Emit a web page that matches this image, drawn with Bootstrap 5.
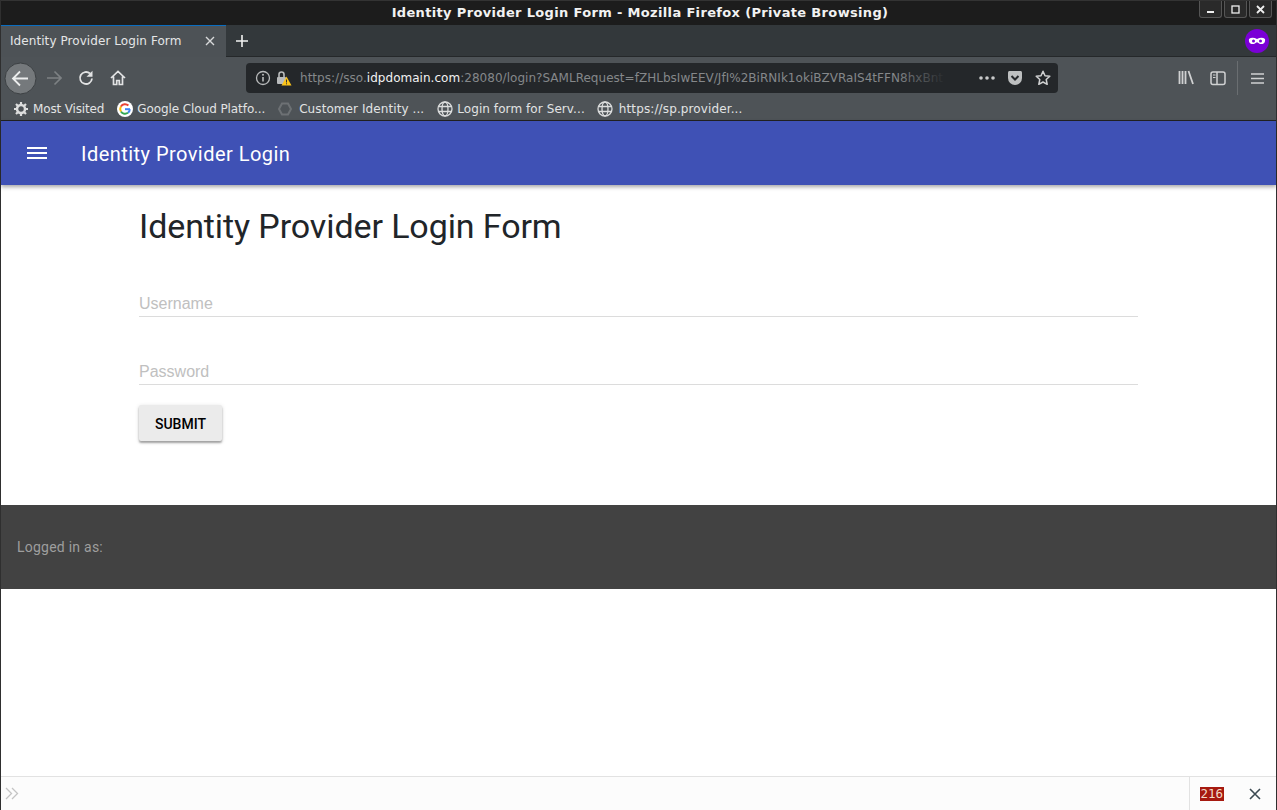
<!DOCTYPE html>
<html lang="en">
<head>
  <meta charset="UTF-8" />
  <title>Identity Provider Login Form</title>
  <link href="https://cdn.jsdelivr.net/npm/bootstrap@5.3.3/dist/css/bootstrap.min.css" rel="stylesheet">
  <style>
    html,body{height:100%;overflow:hidden}
    body{background:#fff;font-family:Roboto,sans-serif;color:#212529}
    svg{flex:none;display:block}
    .frame{height:810px;border:1px solid #2f2f2f;border-top:0}
    .ff{font-family:"DejaVu Sans",sans-serif;font-size:12px;white-space:nowrap}

    .titlebar{height:25px;background:#1c1c1c;color:#f2f2f2;font-weight:700;font-size:13px;letter-spacing:.34px;border-top:1px solid #333}
    .tl-side{flex:1 1 0;align-self:flex-start}
    .tl-title{margin-left:7px}
    .winbtns{gap:2px;padding-right:4px}
    .winbtn{width:23px;height:17px;border:1px solid #555;border-top:0;border-radius:0 0 3px 3px;background:#2a2a2a}

    .tabbar{height:32px;background:#33383b;border-bottom:1px solid #25282a}
    .tab-on{width:225px;height:32px;background:#4d5256;border-top:1px solid #0a6dc0;color:#e5e6e7;padding:0 10px 0 9px;letter-spacing:.07px}
    .new-tab{margin-left:9px}
    .private{margin-left:auto;margin-right:7px;margin-top:1px}

    .tb{height:42px;background:#4e5357}
    .t-back{margin-left:3px}
    .t-fwd{margin-left:9px}
    .t-reload{margin-left:16px}
    .t-home{margin-left:16px}
    .urlbar{margin-left:120px;width:812px;height:30px;background:#24272a;border-radius:4px;color:#85888a;position:relative}
    .u-info{margin-left:9px}
    .u-lock{margin-left:5px}
    .url-txt{margin-left:8px;width:645px;overflow:hidden;letter-spacing:.03px}
    .url-txt b{font-weight:400;color:#f2f2f2}
    .url-fade{position:absolute;left:650px;top:0;width:50px;height:30px;background:linear-gradient(90deg,rgba(36,39,42,0),#24272a)}
    .u-dots{margin-left:33px}
    .u-pocket{margin-left:11px}
    .u-star{margin-left:12px}
    .t-lib{margin-left:120px}
    .t-side{margin-left:15px}
    .t-sep{margin-left:11px;height:34px;border-left:1px solid #6a6e71}
    .t-menu{margin-left:13px}

    .bm{height:22px;background:#4e5357;border-bottom:1px solid #222;color:#e2e3e4;padding:0 0 2px 12px}
    .bm-a{gap:4px;letter-spacing:-.15px}
    .bm-b{gap:4px;margin-left:13px;letter-spacing:-.08px}
    .bm-c{gap:7px;margin-left:13px;letter-spacing:.08px}
    .bm-d{gap:4px;margin-left:13px;letter-spacing:.08px}
    .bm-e{gap:6px;margin-left:12px;letter-spacing:.12px}

    .appbar{height:64px;background:#3f51b5;color:#fff;box-shadow:0 2px 4px rgba(0,0,0,.35);position:relative;font-size:20px;letter-spacing:.46px;padding-left:26px}
    .appbar span{margin-left:34px;padding-top:2px}

    .mainwrap{height:320px;padding:0 138px}
    .mainwrap h1{font-size:34px;font-weight:400;letter-spacing:-.1px;margin:0;padding-top:21px;line-height:40px;color:#212529}
    .fld{height:25px;border-bottom:1px solid #dcdcdc;color:#c0c0c0;font-family:"Liberation Sans",sans-serif;font-size:16px;line-height:24px}
    .fld-a{margin-top:46px}
    .fld-b{margin-top:43px}
    .subm{margin-top:20px;width:83px;height:36px;background:#ebebeb;border:0;border-radius:2px;color:#000;font-weight:500;font-size:14px;box-shadow:0 2px 2px rgba(0,0,0,.3),0 1px 4px rgba(0,0,0,.15);padding:3px 0 0}

    .foot{height:84px;background:#424242;color:#9e9e9e;font-size:14px;letter-spacing:.24px;padding-left:16px;padding-top:1px}
    .spacer{height:187px}

    .findbar{height:34px;background:#fcfcfc;border-top:1px solid #e2e2e2}
    .f-more{margin-left:4px}
    .f-right{margin-left:auto;width:87px;height:33px;border-left:1px solid #e2e2e2;padding-left:10px}
    .cnt{background:#a61a10;color:#f2dcc8;font-family:"DejaVu Sans Mono",monospace;font-size:12.5px;line-height:14px;padding:0 .5px}
    .f-close{margin-left:25px}
  </style>
</head>
<body>
<div class="frame">
  <div class="titlebar ff d-flex align-items-center">
    <div class="tl-side"></div>
    <div class="tl-title">Identity Provider Login Form - Mozilla Firefox (Private Browsing)</div>
    <div class="tl-side winbtns d-flex justify-content-end">
      <div class="winbtn d-flex align-items-center justify-content-center"><svg width="9" height="9"><rect x="1" y="6" width="7" height="2" fill="#eee"/></svg></div>
      <div class="winbtn d-flex align-items-center justify-content-center"><svg width="9" height="9"><rect x="1" y="1" width="7" height="7" fill="none" stroke="#eee" stroke-width="1.3"/></svg></div>
      <div class="winbtn d-flex align-items-center justify-content-center"><svg width="9" height="9"><path d="M1 1l7 7M8 1l-7 7" stroke="#eee" stroke-width="1.8"/></svg></div>
    </div>
  </div>

  <div class="tabbar d-flex align-items-center">
    <div class="tab-on ff d-flex align-items-center justify-content-between">
      <span>Identity Provider Login Form</span>
      <svg width="12" height="12"><path d="M2 2l8 8M10 2l-8 8" stroke="#d8d9da" stroke-width="1.4"/></svg>
    </div>
    <svg class="new-tab" width="14" height="14"><path d="M7 1v12M1 7h12" stroke="#f2f2f2" stroke-width="1.6"/></svg>
    <svg class="private" width="24" height="24"><circle cx="12" cy="12" r="12" fill="#7a00d6"/><path d="M4 10c2-1.600 5-1.600 8 0 3-1.600 6-1.600 8 0 .5 3-1 5-3.500 5-2 0-3-1-4.500-1.800-1.500.8-2.500 1.800-4.500 1.800C5 15 3.500 13 4 10z" fill="#fff"/><circle cx="8.500" cy="12" r="1.500" fill="#7a00d6"/><circle cx="15.500" cy="12" r="1.500" fill="#7a00d6"/></svg>
  </div>

  <div class="tb d-flex align-items-center">
    <svg class="t-back" width="33" height="33"><circle cx="16.500" cy="16.500" r="15.500" fill="#75797c" stroke="#3c4043"/><path d="M9 16.500h15M16 9.500l-7 7 7 7" fill="none" stroke="#eceded" stroke-width="1.800"/></svg>
    <svg class="t-fwd" width="16" height="16"><path d="M1 8h14M8.500 1.500L15 8l-6.500 6.500" fill="none" stroke="#7d8184" stroke-width="1.600"/></svg>
    <svg class="t-reload" width="16" height="16"><path d="M14 8.500A6 6 0 1 1 12 3.500" fill="none" stroke="#e2e3e4" stroke-width="1.800"/><path d="M14.500 0.800v6h-6z" fill="#e2e3e4"/></svg>
    <svg class="t-home" width="16" height="16"><path d="M1 8l7-6.500L15 8M3.500 6.500v8h3.200v-4h2.600v4h3.200v-8" fill="none" stroke="#e2e3e4" stroke-width="1.700"/></svg>
    <div class="urlbar ff d-flex align-items-center">
      <svg class="u-info" width="16" height="16"><circle cx="8" cy="8" r="6.500" fill="none" stroke="#b9bbbc" stroke-width="1.300"/><path d="M8 7v4.500" stroke="#b9bbbc" stroke-width="1.600"/><circle cx="8" cy="4.800" r="1" fill="#b9bbbc"/></svg>
      <svg class="u-lock" width="16" height="16"><rect x="1" y="7" width="9" height="7" rx="1" fill="#b9bbbc"/><path d="M3 7V4.500a2.500 2.500 0 0 1 5 0V7" fill="none" stroke="#b9bbbc" stroke-width="1.600"/><path d="M10.500 6.500l5 9h-10z" fill="#fcc419"/><path d="M10.500 9.500v3M10.500 13.300v1" stroke="#333" stroke-width="1"/></svg>
      <div class="url-txt">https://sso.<b>idpdomain.com</b>:28080/login?SAMLRequest=fZHLbsIwEEV/JfI%2BiRNIk1okiBZVRaIS4tFFN8hxBnt</div>
      <div class="url-fade"></div>
      <svg class="u-dots" width="18" height="6"><g fill="#c9cacb"><circle cx="3" cy="3" r="1.800"/><circle cx="9" cy="3" r="1.800"/><circle cx="15" cy="3" r="1.800"/></g></svg>
      <svg class="u-pocket" width="16" height="16"><path d="M1 2.500C1 1.700 1.700 1 2.500 1h11c.8 0 1.500.7 1.500 1.500V8a7 7 0 0 1-14 0z" fill="#bdbfc0"/><path d="M4.500 6L8 9.500 11.500 6" fill="none" stroke="#24272a" stroke-width="2"/></svg>
      <svg class="u-star" width="16" height="16"><path d="M8 1.300l2 4.500 4.800.5-3.600 3.200 1 4.800L8 12l-4.200 2.300 1-4.800L1.200 6.300 6 5.800z" fill="none" stroke="#d0d1d2" stroke-width="1.500" stroke-linejoin="round"/></svg>
    </div>
    <svg class="t-lib" width="17" height="16"><path d="M1.500 1v13M4.500 1v13M7.500 1v13M10.500 1l4.500 13" stroke="#d0d1d2" stroke-width="1.800" fill="none"/></svg>
    <svg class="t-side" width="16" height="15"><rect x="1" y="1" width="14" height="12.500" rx="2" fill="none" stroke="#d0d1d2" stroke-width="1.500"/><path d="M7 1v12" stroke="#d0d1d2" stroke-width="1.500"/><path d="M3 4h2.500M3 6.500h2.500" stroke="#d0d1d2"/></svg>
    <div class="t-sep"></div>
    <svg class="t-menu" width="13" height="13"><path d="M0 2h13M0 6.500h13M0 11h13" stroke="#d0d1d2" stroke-width="1.500"/></svg>
  </div>

  <div class="bm ff d-flex align-items-center">
    <span class="bm-a d-flex align-items-center"><svg width="16" height="16" viewBox="0 0 16 16"><circle cx="8" cy="8" r="4" fill="none" stroke="#dcdddd" stroke-width="2.500"/><path d="M8 1v3M8 12v3M1 8h3M12 8h3M3 3l2 2M11 11l2 2M13 3l-2 2M5 11l-2 2" stroke="#dcdddd" stroke-width="2.200"/></svg>Most Visited</span>
    <span class="bm-b d-flex align-items-center"><svg width="16" height="16" viewBox="0 0 16 16"><circle cx="8" cy="8" r="8" fill="#fff"/><path d="M13 8.200H8" stroke="#4285f4" stroke-width="2"/><path d="M12.800 8.200A4.900 4.900 0 0 1 11 11.800" fill="none" stroke="#4285f4" stroke-width="2"/><path d="M11 11.800A5 5 0 0 1 3.900 10.500" fill="none" stroke="#34a853" stroke-width="2"/><path d="M3.900 10.500A5 5 0 0 1 3.900 5.500" fill="none" stroke="#fbbc05" stroke-width="2"/><path d="M3.900 5.500A5 5 0 0 1 11.400 4.500" fill="none" stroke="#ea4335" stroke-width="2"/></svg>Google Cloud Platfo...</span>
    <span class="bm-c d-flex align-items-center"><svg width="14" height="14" viewBox="0 0 14 14"><path d="M4 1.500h6L13 7l-3 5.500H4L1 7z" fill="none" stroke="#6d7174" stroke-width="2"/></svg>Customer Identity ...</span>
    <span class="bm-d d-flex align-items-center"><svg width="16" height="16" viewBox="0 0 16 16"><g fill="none" stroke="#dcdddd" stroke-width="1.300"><circle cx="8" cy="8" r="7"/><ellipse cx="8" cy="8" rx="3" ry="7"/><path d="M1.500 5.500h13M1.500 10.500h13"/></g></svg>Login form for Serv...</span>
    <span class="bm-e d-flex align-items-center"><svg width="16" height="16" viewBox="0 0 16 16"><g fill="none" stroke="#dcdddd" stroke-width="1.300"><circle cx="8" cy="8" r="7"/><ellipse cx="8" cy="8" rx="3" ry="7"/><path d="M1.500 5.500h13M1.500 10.500h13"/></g></svg>https://sp.provider...</span>
  </div>

  <div class="appbar d-flex align-items-center">
    <svg width="20" height="14"><path d="M0 2h20M0 7h20M0 12h20" stroke="#fff" stroke-width="2"/></svg>
    <span>Identity Provider Login</span>
  </div>

  <div class="mainwrap">
    <h1>Identity Provider Login Form</h1>
    <div class="fld fld-a">Username</div>
    <div class="fld fld-b">Password</div>
    <button class="subm d-block">SUBMIT</button>
  </div>

  <div class="foot d-flex align-items-center">Logged in as:</div>
  <div class="spacer"></div>

  <div class="findbar d-flex align-items-center">
    <svg class="f-more" width="14" height="13"><path d="M1 1l5.500 5.500L1 12M7 1l5.500 5.500L7 12" fill="none" stroke="#c4c4c4" stroke-width="1.300"/></svg>
    <div class="f-right d-flex align-items-center">
      <div class="cnt">216</div>
      <svg class="f-close" width="12" height="12"><path d="M1 1l10 10M11 1L1 11" stroke="#3c4a52" stroke-width="1.600"/></svg>
    </div>
  </div>
</div>
<script src="https://cdn.jsdelivr.net/npm/bootstrap@5.3.3/dist/js/bootstrap.bundle.min.js"></script>
</body>
</html>
